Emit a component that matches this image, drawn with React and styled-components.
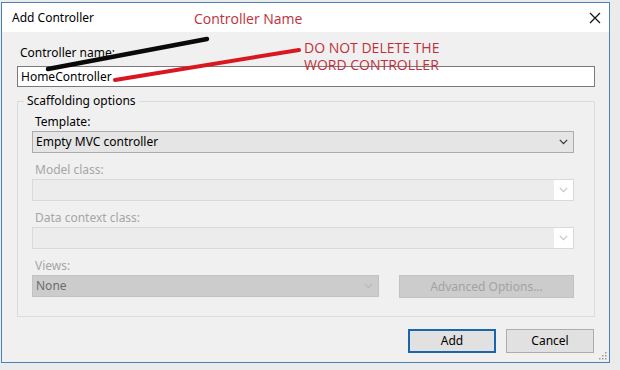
import React from 'react';
import styled, { createGlobalStyle } from 'styled-components';

const GlobalStyle = createGlobalStyle`
  html, body {
    margin: 0;
    padding: 0;
    background: #ebebeb;
  }
  body {
    font-family: "Noto Sans", "Liberation Sans", sans-serif;
    font-size: 12px;
    color: #000;
  }
`;

const Chevron = ({ color = '#333' }) => (
  <svg width="9" height="6" viewBox="0 0 9 6">
    <path d="M0.8 0.8 L4.5 4.6 L8.2 0.8" fill="none" stroke={color} strokeWidth="1.2" />
  </svg>
);

const CloseIcon = () => (
  <svg width="12" height="12" viewBox="0 0 12 12">
    <path d="M1 1 L11 11 M11 1 L1 11" stroke="#111" strokeWidth="1.2" fill="none" />
  </svg>
);

const Grip = () => (
  <svg width="8" height="8" viewBox="0 0 8 8">
    <rect x="6" y="0" width="1.5" height="1.5" fill="#999" />
    <rect x="3" y="3" width="1.5" height="1.5" fill="#999" />
    <rect x="6" y="3" width="1.5" height="1.5" fill="#999" />
    <rect x="0" y="6" width="1.5" height="1.5" fill="#999" />
    <rect x="3" y="6" width="1.5" height="1.5" fill="#999" />
    <rect x="6" y="6" width="1.5" height="1.5" fill="#999" />
  </svg>
);

export default function App() {
  return (
    <>
      <GlobalStyle />
      <Window>
        <TitleBar>
          <Title>Add Controller</Title>
          <CloseButton><CloseIcon /></CloseButton>
        </TitleBar>

        <Body>
          <Label>Controller name:</Label>
          <TextInput>HomeController</TextInput>

          <Group>
            <Legend>Scaffolding options</Legend>
            <GroupInner>
              <Field>
                <Label>Template:</Label>
                <Combo $variant="active">
                  <ComboText>Empty MVC controller</ComboText>
                  <ComboArrow $variant="active"><Chevron color="#333" /></ComboArrow>
                </Combo>
              </Field>
              <Field>
                <Label $disabled>Model class:</Label>
                <Combo $variant="empty">
                  <ComboText />
                  <ComboArrow $variant="empty"><Chevron color="#c4c4c4" /></ComboArrow>
                </Combo>
              </Field>
              <Field>
                <Label $disabled>Data context class:</Label>
                <Combo $variant="empty">
                  <ComboText />
                  <ComboArrow $variant="empty"><Chevron color="#c4c4c4" /></ComboArrow>
                </Combo>
              </Field>
              <Field>
                <Label $disabled>Views:</Label>
                <ViewsRow>
                  <Combo $variant="disabled">
                    <ComboText $disabled>None</ComboText>
                    <ComboArrow $variant="disabled"><Chevron color="#b8b8b8" /></ComboArrow>
                  </Combo>
                  <AdvancedButton>Advanced Options...</AdvancedButton>
                </ViewsRow>
              </Field>
            </GroupInner>
          </Group>

          <Footer>
            <Button $primary>Add</Button>
            <Button>Cancel</Button>
          </Footer>
        </Body>

        <ResizeGrip><Grip /></ResizeGrip>

        <Annotation $top={7} $left={192} $size={14}>Controller Name</Annotation>
        <Annotation $top={36} $left={302} $size={14}>
          DO NOT DELETE THE<br />WORD CONTROLLER
        </Annotation>
        <Strokes width="609" height="361" viewBox="0 0 609 361">
          <path d="M46 66 L205 36" stroke="#0a0a0a" strokeWidth="4.5" strokeLinecap="round" />
          <path d="M113 77 L297 47" stroke="#d81820" strokeWidth="4" strokeLinecap="round" />
        </Strokes>
      </Window>
    </>
  );
}

const Window = styled.div`
  position: relative;
  box-sizing: border-box;
  width: 609px;
  height: 361px;
  margin: 2px 0 0 1px;
  border: 1px solid #4a82b4;
  background: #f0f0f0;
  display: flex;
  flex-direction: column;
  overflow: hidden;
`;

const TitleBar = styled.div`
  height: 29px;
  flex: none;
  background: #fff;
  display: flex;
  align-items: center;
  justify-content: space-between;
  padding: 0 8px 0 10px;
`;

const Title = styled.span`
  font-size: 12px;
  color: #000;
`;

const CloseButton = styled.span`
  display: flex;
  align-items: center;
  justify-content: center;
  width: 12px;
  height: 12px;
`;

const Body = styled.div`
  flex: 1;
  display: flex;
  flex-direction: column;
  padding: 13px 14px 9px 15px;
`;

const Label = styled.div`
  height: 16px;
  line-height: 16px;
  font-size: 12px;
  color: ${({ $disabled }) => ($disabled ? '#a6a6a6' : '#000')};
  margin: 0 0 1px 3px;
`;

const TextInput = styled.div`
  box-sizing: border-box;
  height: 21px;
  margin-top: 4px;
  border: 1px solid #7a7a7a;
  background: #fff;
  padding: 0 3px;
  line-height: 19px;
  font-size: 12px;
`;

const Group = styled.fieldset`
  margin: 6px 0 0 0;
  padding: 0;
  border: 1px solid #dcdcdc;
  min-width: 0;
`;

const Legend = styled.legend`
  margin-left: 6px;
  padding: 0 3px;
  font-size: 12px;
  line-height: 16px;
`;

const GroupInner = styled.div`
  padding: 5px 20px 18px 14px;
`;

const Field = styled.div`
  & + & {
    margin-top: 9px;
  }
`;

const comboStyles = {
  active: 'background: #e5e5e5; border-color: #acacac;',
  empty: 'background: #ececec; border-color: #d9d9d9;',
  disabled: 'background: #cccccc; border-color: #c2c2c2;',
};

const Combo = styled.div`
  box-sizing: border-box;
  flex: 1;
  height: 22px;
  display: flex;
  align-items: stretch;
  border: 1px solid;
  ${({ $variant }) => comboStyles[$variant]}
`;

const ComboText = styled.div`
  flex: 1;
  padding-left: 3px;
  line-height: 20px;
  font-size: 12px;
  color: ${({ $disabled }) => ($disabled ? '#6d6d6d' : '#000')};
`;

const ComboArrow = styled.div`
  width: 19px;
  display: flex;
  align-items: center;
  justify-content: center;
  background: ${({ $variant }) => ($variant === 'empty' ? '#fff' : 'transparent')};
`;

const ViewsRow = styled.div`
  display: flex;
  gap: 20px;
  margin-top: 1px;
`;

const AdvancedButton = styled.div`
  box-sizing: border-box;
  width: 175px;
  height: 23px;
  flex: none;
  background: #cccccc;
  border: 1px solid #c2c2c2;
  color: #a3a3a3;
  font-size: 12px;
  line-height: 21px;
  text-align: center;
`;

const Footer = styled.div`
  margin-top: auto;
  display: flex;
  justify-content: flex-end;
  gap: 10px;
  padding-right: 1px;
`;

const Button = styled.div`
  box-sizing: border-box;
  width: 88px;
  height: 24px;
  background: #e1e1e1;
  border: ${({ $primary }) => ($primary ? '2px solid #1a66ad' : '1px solid #adadad')};
  font-size: 12px;
  line-height: ${({ $primary }) => ($primary ? '20px' : '22px')};
  text-align: center;
`;

const ResizeGrip = styled.div`
  position: absolute;
  right: 2px;
  bottom: 2px;
  width: 8px;
  height: 8px;
  display: flex;
`;

const Annotation = styled.div`
  position: absolute;
  top: ${({ $top }) => $top}px;
  left: ${({ $left }) => $left}px;
  font-family: "Open Sans", "Noto Sans", sans-serif;
  font-size: ${({ $size }) => $size}px;
  line-height: 17px;
  color: #c0303a;
  white-space: nowrap;
`;

const Strokes = styled.svg`
  position: absolute;
  left: 0;
  top: 0;
  pointer-events: none;
`;
